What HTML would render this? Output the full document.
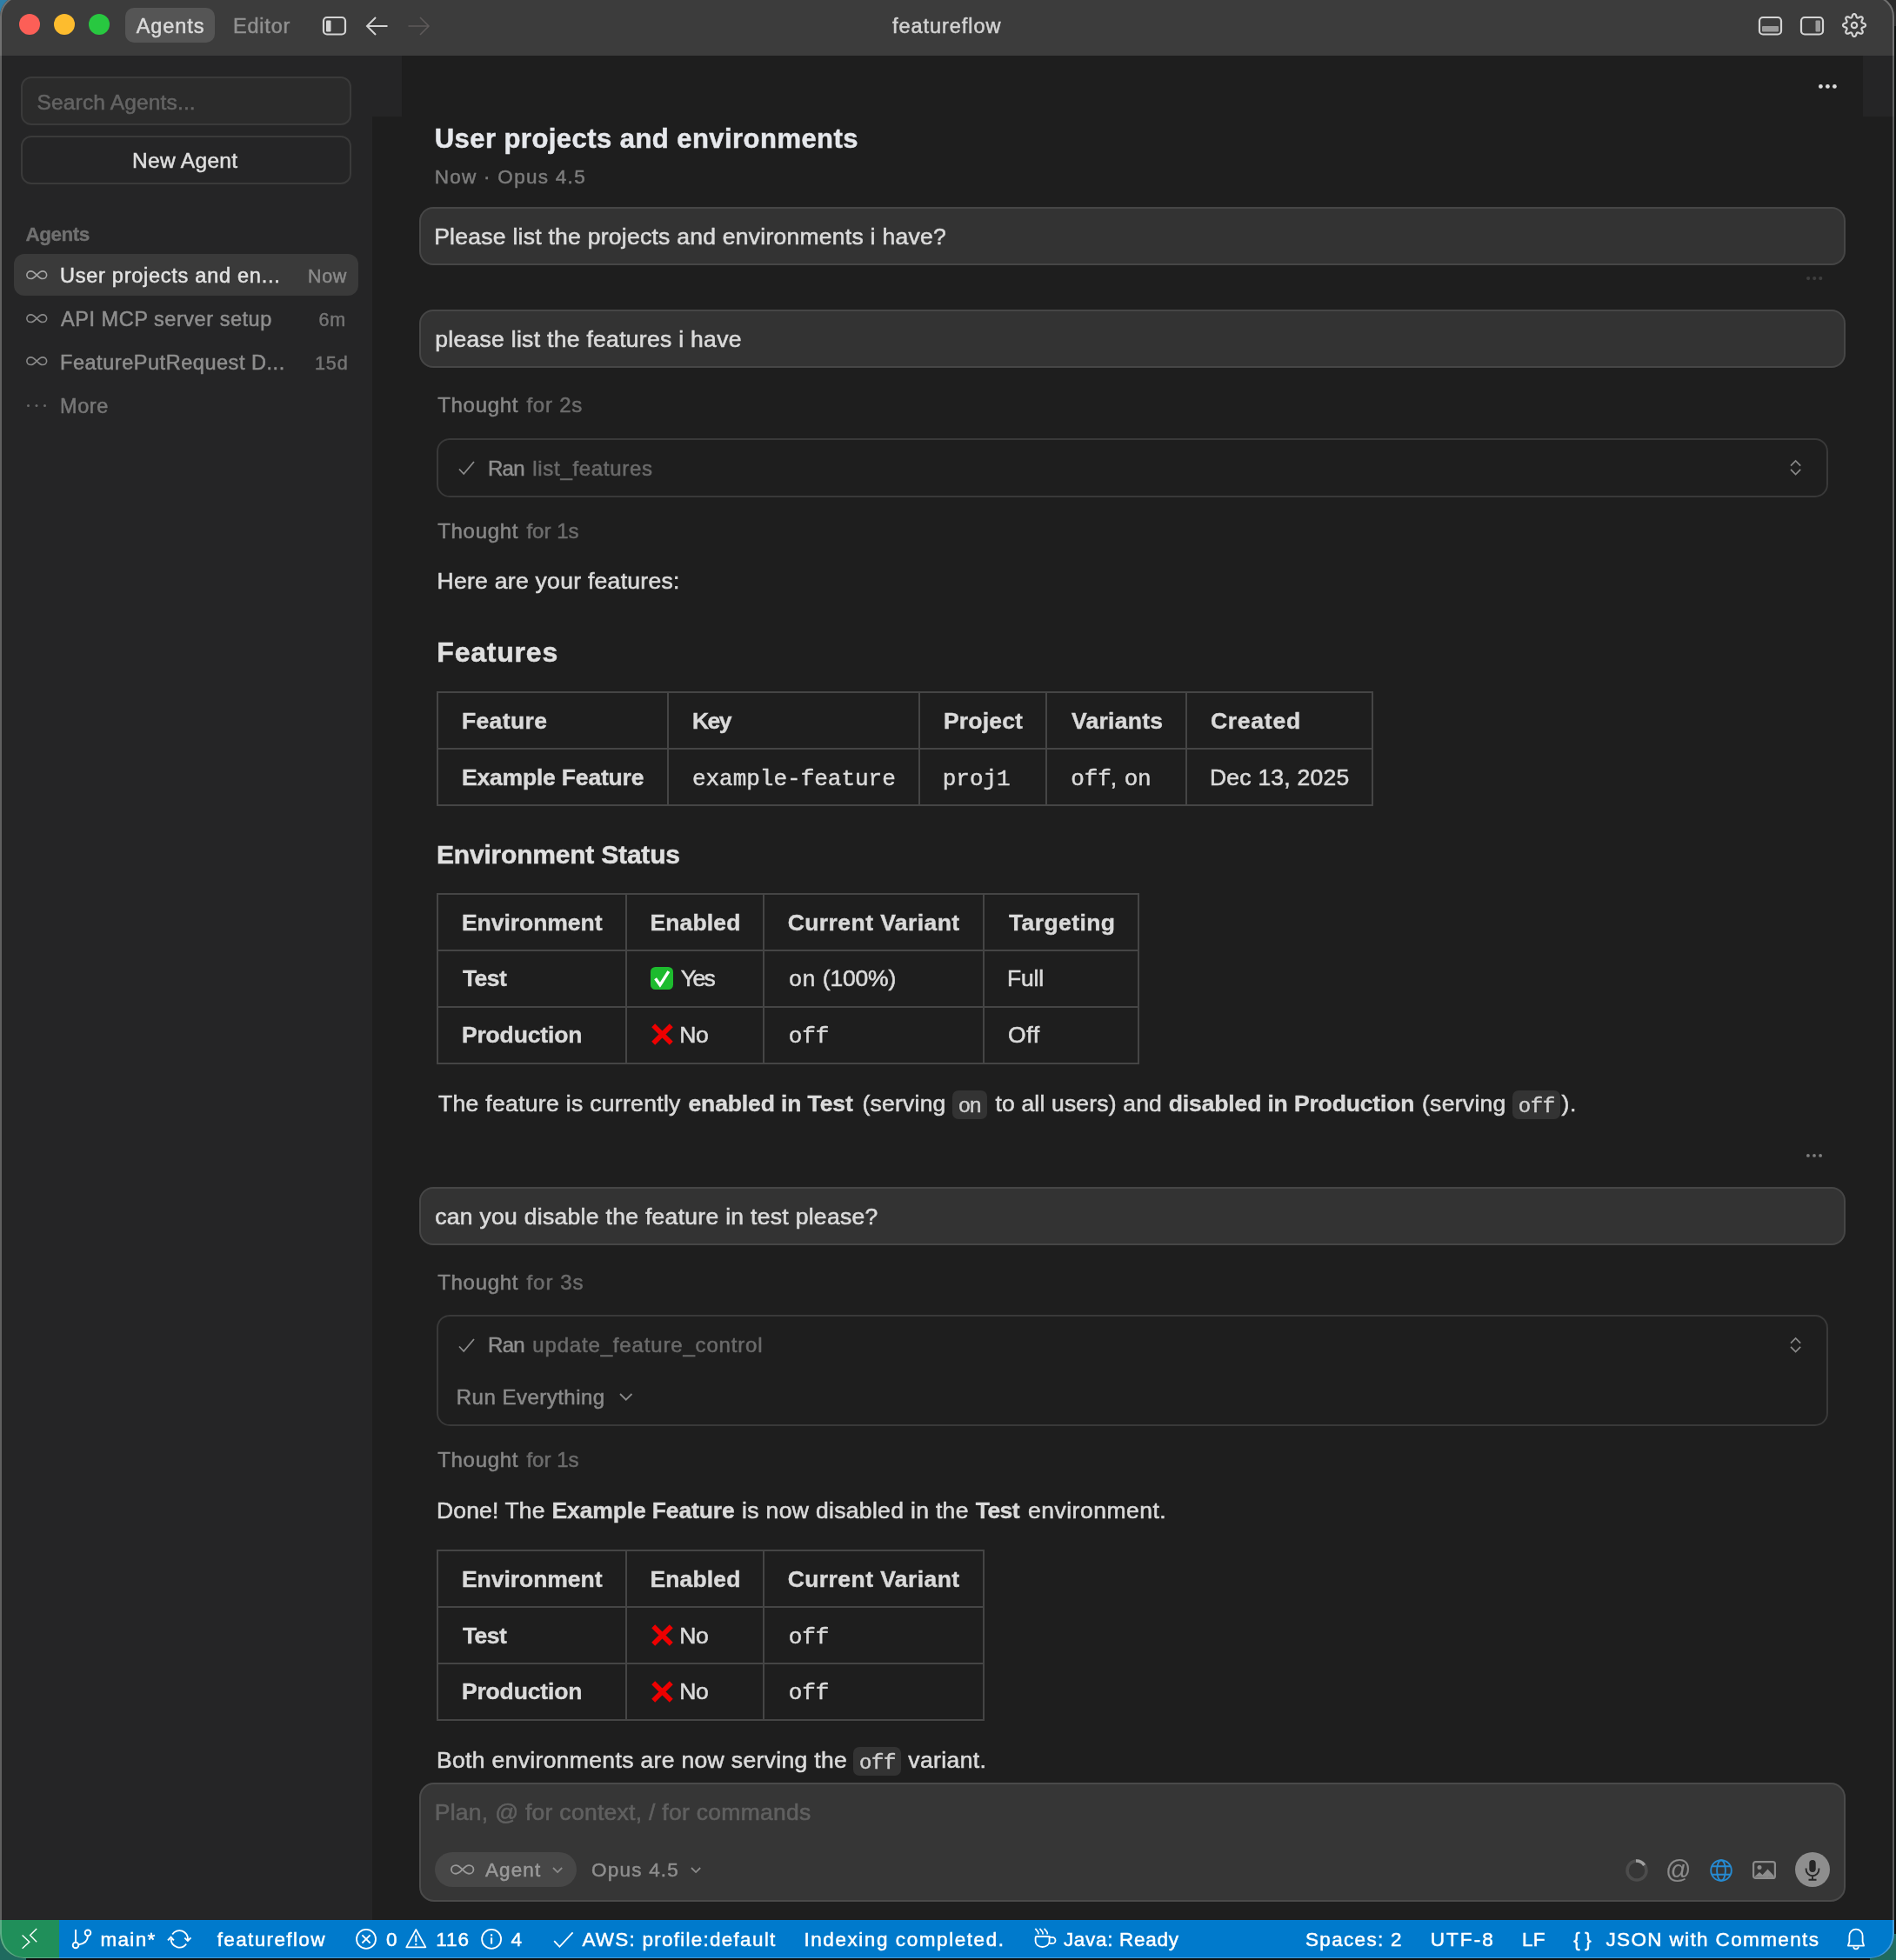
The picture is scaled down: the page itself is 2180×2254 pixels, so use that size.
<!DOCTYPE html>
<html><head><meta charset="utf-8"><title>featureflow</title><style>
html,body{margin:0;padding:0;background:#0b0f0e;}
body{width:2180px;height:2254px;position:relative;overflow:hidden;font-family:"Liberation Sans", sans-serif;}
.a{position:absolute;box-sizing:border-box;}
.t{position:absolute;line-height:0;white-space:pre;font-family:"Liberation Sans", sans-serif;}
.t i{display:inline-block;width:0;height:40px;}
.m{font-family:"Liberation Mono", monospace;}
#w{position:absolute;left:0;top:-5px;width:2178px;height:2257px;overflow:hidden;border-radius:24px 24px 28px 28px;background:#3c3c3c;}
#in{position:absolute;left:0;top:5px;width:2178px;height:2252px;will-change:transform;}
#wb{position:absolute;left:0;top:-5px;width:2178px;height:2257px;box-sizing:border-box;border-radius:24px 24px 28px 28px;border:2px solid rgba(255,255,255,0.27);border-bottom-width:1.5px;}
.k{position:absolute;width:30px;height:30px;}
svg{overflow:visible;}
</style></head><body>
<div class="k" style="left:0;top:0;background:#2f7fa8"></div><div class="k" style="left:0;top:2224px;background:#1f6b5f"></div><div class="k" style="left:2150px;top:2224px;background:#1f6b5f"></div><div class="k" style="left:2150px;top:0;background:#2a2a2a"></div>
<div id="w"><div id="in">
<div class="a" style="left:0px;top:0px;width:2178px;height:2252px;background:#1e1e1e;"></div>
<div class="a" style="left:0px;top:-5px;width:2178px;height:69px;background:#3c3c3c;"></div>
<div class="a" style="left:0px;top:64px;width:428px;height:2144px;background:#252526;"></div>
<div class="a" style="left:428px;top:64px;width:34px;height:70px;background:#252526;"></div>
<div class="a" style="left:2142px;top:64px;width:36px;height:70px;background:#252526;"></div>
<div class="a" style="left:22px;top:16px;width:24px;height:24px;background:#fc5f57;border-radius:12px;"></div>
<div class="a" style="left:62px;top:16px;width:24px;height:24px;background:#fdbc2e;border-radius:12px;"></div>
<div class="a" style="left:102px;top:16px;width:24px;height:24px;background:#28c840;border-radius:12px;"></div>
<div class="a" style="left:144px;top:9px;width:103px;height:40px;background:#555555;border-radius:10px;"></div>
<svg class="a" style="left:370px;top:18px;" width="30" height="24" viewBox="0 0 30 24"><rect x="2" y="2" width="25" height="19.5" rx="4" fill="none" stroke="#d4d4d4" stroke-width="2.2"/><rect x="5" y="5.5" width="5.5" height="13" rx="1" fill="#d4d4d4"/></svg>
<svg class="a" style="left:420px;top:18px;" width="28" height="24" viewBox="0 0 28 24"><path d="M25.5 12H2.5M12 2L2 12l10 10" fill="none" stroke="#d4d4d4" stroke-width="2" stroke-linejoin="miter"/></svg>
<svg class="a" style="left:467px;top:18px;" width="28" height="24" viewBox="0 0 28 24"><path d="M2.5 12h23M16 2l10 10-10 10" fill="none" stroke="#5e5a5a" stroke-width="1.6"/></svg>
<svg class="a" style="left:2021px;top:18px;" width="30" height="24" viewBox="0 0 30 24"><rect x="2" y="2" width="25" height="19.5" rx="4" fill="none" stroke="#d4d4d4" stroke-width="2.2"/><rect x="5" y="12" width="19" height="6.5" rx="1" fill="#9a9a9a"/></svg>
<svg class="a" style="left:2069px;top:18px;" width="30" height="24" viewBox="0 0 30 24"><rect x="2" y="2" width="25" height="19.5" rx="4" fill="none" stroke="#d4d4d4" stroke-width="2.2"/><rect x="18.5" y="5.5" width="5.5" height="13" rx="1" fill="#9a9a9a"/></svg>
<svg class="a" style="left:2116px;top:13px;" width="32" height="32" viewBox="0 0 32 32"><path d="M16.00 3.00L16.63 3.12L17.23 3.47L17.77 4.06L18.17 5.11L18.46 6.17L18.79 6.80L19.13 7.24L19.52 7.50L19.98 7.59L20.53 7.53L21.21 7.31L22.17 6.77L23.19 6.31L23.99 6.27L24.66 6.44L25.19 6.81L25.56 7.34L25.73 8.01L25.69 8.81L25.23 9.83L24.69 10.79L24.47 11.47L24.41 12.02L24.50 12.48L24.76 12.87L25.20 13.21L25.83 13.54L26.89 13.83L27.94 14.23L28.53 14.77L28.88 15.37L29.00 16.00L28.88 16.63L28.53 17.23L27.94 17.77L26.89 18.17L25.83 18.46L25.20 18.79L24.76 19.13L24.50 19.52L24.41 19.98L24.47 20.53L24.69 21.21L25.23 22.17L25.69 23.19L25.73 23.99L25.56 24.66L25.19 25.19L24.66 25.56L23.99 25.73L23.19 25.69L22.17 25.23L21.21 24.69L20.53 24.47L19.98 24.41L19.52 24.50L19.13 24.76L18.79 25.20L18.46 25.83L18.17 26.89L17.77 27.94L17.23 28.53L16.63 28.88L16.00 29.00L15.37 28.88L14.77 28.53L14.23 27.94L13.83 26.89L13.54 25.83L13.21 25.20L12.87 24.76L12.48 24.50L12.02 24.41L11.47 24.47L10.79 24.69L9.83 25.23L8.81 25.69L8.01 25.73L7.34 25.56L6.81 25.19L6.44 24.66L6.27 23.99L6.31 23.19L6.77 22.17L7.31 21.21L7.53 20.53L7.59 19.98L7.50 19.52L7.24 19.13L6.80 18.79L6.17 18.46L5.11 18.17L4.06 17.77L3.47 17.23L3.12 16.63L3.00 16.00L3.12 15.37L3.47 14.77L4.06 14.23L5.11 13.83L6.17 13.54L6.80 13.21L7.24 12.87L7.50 12.48L7.59 12.02L7.53 11.47L7.31 10.79L6.77 9.83L6.31 8.81L6.27 8.01L6.44 7.34L6.81 6.81L7.34 6.44L8.01 6.27L8.81 6.31L9.83 6.77L10.79 7.31L11.47 7.53L12.02 7.59L12.48 7.50L12.87 7.24L13.21 6.80L13.54 6.17L13.83 5.11L14.23 4.06L14.77 3.47L15.37 3.12L16.00 3.00Z" fill="none" stroke="#d4d4d4" stroke-width="2.2" stroke-linejoin="round"/><circle cx="16" cy="16" r="3.2" fill="none" stroke="#d4d4d4" stroke-width="2.2"/></svg>
<div class="a" style="left:24px;top:88px;width:380px;height:56px;background:#2b2b2b;border-radius:12px;border:2px solid #3a3a3a;"></div>
<div class="a" style="left:24px;top:156px;width:380px;height:56px;background:#252526;border-radius:12px;border:2px solid #3a3a3a;"></div>
<div class="a" style="left:16px;top:292px;width:396px;height:48px;background:#3a3a3a;border-radius:12px;"></div>
<svg class="a" style="left:29.5px;top:310.9px;" width="24.5" height="10.4" viewBox="0 0 24.5 10.4"><path d="M12.25 5.2C9.8 2.7 8.3 0.85 5.6 0.85 2.9 0.85 0.85 2.7 0.85 5.2S2.9 9.55 5.6 9.55C8.3 9.55 9.8 7.7 12.25 5.2zM12.25 5.2C14.7 2.7 16.2 0.85 18.9 0.85 21.6 0.85 23.65 2.7 23.65 5.2S21.6 9.55 18.9 9.55C16.2 9.55 14.7 7.7 12.25 5.2z" fill="none" stroke="#a4a4a4" stroke-width="1.6"/></svg>
<svg class="a" style="left:29.5px;top:360.9px;" width="24.5" height="10.4" viewBox="0 0 24.5 10.4"><path d="M12.25 5.2C9.8 2.7 8.3 0.85 5.6 0.85 2.9 0.85 0.85 2.7 0.85 5.2S2.9 9.55 5.6 9.55C8.3 9.55 9.8 7.7 12.25 5.2zM12.25 5.2C14.7 2.7 16.2 0.85 18.9 0.85 21.6 0.85 23.65 2.7 23.65 5.2S21.6 9.55 18.9 9.55C16.2 9.55 14.7 7.7 12.25 5.2z" fill="none" stroke="#8a8a8a" stroke-width="1.6"/></svg>
<svg class="a" style="left:29.5px;top:410.4px;" width="24.5" height="10.4" viewBox="0 0 24.5 10.4"><path d="M12.25 5.2C9.8 2.7 8.3 0.85 5.6 0.85 2.9 0.85 0.85 2.7 0.85 5.2S2.9 9.55 5.6 9.55C8.3 9.55 9.8 7.7 12.25 5.2zM12.25 5.2C14.7 2.7 16.2 0.85 18.9 0.85 21.6 0.85 23.65 2.7 23.65 5.2S21.6 9.55 18.9 9.55C16.2 9.55 14.7 7.7 12.25 5.2z" fill="none" stroke="#8a8a8a" stroke-width="1.6"/></svg>
<svg class="a" style="left:29.700000000000003px;top:463.5px;" width="24.0" height="5.0" viewBox="0 0 24.0 5.0"><circle cx="2.5" cy="2.5" r="1.5" fill="#6a6a6a"/><circle cx="12.0" cy="2.5" r="1.5" fill="#6a6a6a"/><circle cx="21.5" cy="2.5" r="1.5" fill="#6a6a6a"/></svg>
<svg class="a" style="left:2090.4px;top:95.6px;" width="22.8" height="6.8" viewBox="0 0 22.8 6.8"><circle cx="3.4" cy="3.4" r="2.4" fill="#dcdcdc"/><circle cx="11.4" cy="3.4" r="2.4" fill="#dcdcdc"/><circle cx="19.4" cy="3.4" r="2.4" fill="#dcdcdc"/></svg>
<div class="a" style="left:482px;top:238px;width:1640px;height:67px;background:#333333;border-radius:16px;border:2px solid #464646;"></div>
<svg class="a" style="left:2075.6000000000004px;top:316.7px;" width="20.4" height="6.2" viewBox="0 0 20.4 6.2"><circle cx="3.1" cy="3.1" r="2.1" fill="#3e3e3e"/><circle cx="10.2" cy="3.1" r="2.1" fill="#3e3e3e"/><circle cx="17.3" cy="3.1" r="2.1" fill="#3e3e3e"/></svg>
<div class="a" style="left:482px;top:356px;width:1640px;height:67px;background:#333333;border-radius:16px;border:2px solid #464646;"></div>
<div class="a" style="left:502px;top:503.6px;width:1600px;height:68.4px;border-radius:15px;border:2px solid #393939;"></div>
<svg class="a" style="left:526.8px;top:530.0px;" width="19" height="16" viewBox="0 0 19 16"><path d="M1 9.5l5.2 5.5L18 1" fill="none" stroke="#8c8c8c" stroke-width="1.8"/></svg>
<svg class="a" style="left:2058px;top:528.8000000000001px;" width="13.2" height="17.5" viewBox="0 0 13.2 17.5"><path d="M1 6.6L6.6 1l5.6 5.6M1 10.9l5.6 5.6 5.6-5.6" fill="none" stroke="#8a8a8a" stroke-width="1.7"/></svg>
<div class="a" style="left:502px;top:795px;width:1077px;height:2px;background:#454545;"></div>
<div class="a" style="left:502px;top:860px;width:1077px;height:2px;background:#454545;"></div>
<div class="a" style="left:502px;top:924.7px;width:1077px;height:2px;background:#454545;"></div>
<div class="a" style="left:502px;top:795px;width:2px;height:131.70000000000005px;background:#454545;"></div>
<div class="a" style="left:767px;top:795px;width:2px;height:131.70000000000005px;background:#454545;"></div>
<div class="a" style="left:1056px;top:795px;width:2px;height:131.70000000000005px;background:#454545;"></div>
<div class="a" style="left:1202px;top:795px;width:2px;height:131.70000000000005px;background:#454545;"></div>
<div class="a" style="left:1363px;top:795px;width:2px;height:131.70000000000005px;background:#454545;"></div>
<div class="a" style="left:1577px;top:795px;width:2px;height:131.70000000000005px;background:#454545;"></div>
<div class="a" style="left:502px;top:1027px;width:808px;height:2px;background:#454545;"></div>
<div class="a" style="left:502px;top:1092px;width:808px;height:2px;background:#454545;"></div>
<div class="a" style="left:502px;top:1156.8px;width:808px;height:2px;background:#454545;"></div>
<div class="a" style="left:502px;top:1221.6px;width:808px;height:2px;background:#454545;"></div>
<div class="a" style="left:502px;top:1027px;width:2px;height:196.5999999999999px;background:#454545;"></div>
<div class="a" style="left:718.5px;top:1027px;width:2px;height:196.5999999999999px;background:#454545;"></div>
<div class="a" style="left:876.8px;top:1027px;width:2px;height:196.5999999999999px;background:#454545;"></div>
<div class="a" style="left:1130px;top:1027px;width:2px;height:196.5999999999999px;background:#454545;"></div>
<div class="a" style="left:1308px;top:1027px;width:2px;height:196.5999999999999px;background:#454545;"></div>
<svg class="a" style="left:747.9px;top:1112px;" width="26" height="26" viewBox="0 0 26 26"><rect x="0" y="0" width="26" height="26" rx="5.5" fill="#1dbb2e"/><path d="M5.6 13.2l5.3 7.6L20.8 5.2" fill="none" stroke="#fff" stroke-width="3.4" stroke-linejoin="miter"/></svg>
<svg class="a" style="left:748.6px;top:1177.3px;" width="25" height="25" viewBox="0 0 25 25"><path d="M2.2 2.2L22.8 22.8M22.8 2.2L2.2 22.8" fill="none" stroke="#ee0000" stroke-width="5.6"/></svg>
<div class="a" style="left:1095px;top:1254.3px;width:39.5px;height:33px;background:#333333;border-radius:7px;"></div>
<div class="a" style="left:1739px;top:1254.3px;width:54.5px;height:33px;background:#333333;border-radius:7px;"></div>
<svg class="a" style="left:2076.0px;top:1326.1px;" width="20.0" height="5.8" viewBox="0 0 20.0 5.8"><circle cx="2.9" cy="2.9" r="1.9" fill="#808080"/><circle cx="10.0" cy="2.9" r="1.9" fill="#808080"/><circle cx="17.099999999999998" cy="2.9" r="1.9" fill="#808080"/></svg>
<div class="a" style="left:482px;top:1365px;width:1640px;height:67px;background:#333333;border-radius:16px;border:2px solid #464646;"></div>
<div class="a" style="left:502px;top:1512px;width:1600px;height:128px;border-radius:15px;border:2px solid #393939;"></div>
<svg class="a" style="left:526.5px;top:1538.5px;" width="19" height="16" viewBox="0 0 19 16"><path d="M1 9.5l5.2 5.5L18 1" fill="none" stroke="#8c8c8c" stroke-width="1.8"/></svg>
<svg class="a" style="left:2058px;top:1537.6px;" width="13.2" height="17.5" viewBox="0 0 13.2 17.5"><path d="M1 6.6L6.6 1l5.6 5.6M1 10.9l5.6 5.6 5.6-5.6" fill="none" stroke="#8a8a8a" stroke-width="1.7"/></svg>
<svg class="a" style="left:712.2px;top:1602.4px;" width="15.5" height="8.75" viewBox="0 0 15.5 8.75"><path d="M1 1l6.75 6.75L14.5 1" fill="none" stroke="#8a8a8a" stroke-width="1.8"/></svg>
<div class="a" style="left:502px;top:1781.7px;width:630px;height:2px;background:#454545;"></div>
<div class="a" style="left:502px;top:1846.6px;width:630px;height:2px;background:#454545;"></div>
<div class="a" style="left:502px;top:1911.8px;width:630px;height:2px;background:#454545;"></div>
<div class="a" style="left:502px;top:1976.7px;width:630px;height:2px;background:#454545;"></div>
<div class="a" style="left:502px;top:1781.7px;width:2px;height:197.0px;background:#454545;"></div>
<div class="a" style="left:718.5px;top:1781.7px;width:2px;height:197.0px;background:#454545;"></div>
<div class="a" style="left:876.8px;top:1781.7px;width:2px;height:197.0px;background:#454545;"></div>
<div class="a" style="left:1130px;top:1781.7px;width:2px;height:197.0px;background:#454545;"></div>
<svg class="a" style="left:748.6px;top:1867.8px;" width="25" height="25" viewBox="0 0 25 25"><path d="M2.2 2.2L22.8 22.8M22.8 2.2L2.2 22.8" fill="none" stroke="#ee0000" stroke-width="5.6"/></svg>
<svg class="a" style="left:748.6px;top:1932.5px;" width="25" height="25" viewBox="0 0 25 25"><path d="M2.2 2.2L22.8 22.8M22.8 2.2L2.2 22.8" fill="none" stroke="#ee0000" stroke-width="5.6"/></svg>
<div class="a" style="left:981.2px;top:2009px;width:54.399999999999864px;height:33px;background:#333333;border-radius:7px;"></div>
<div class="a" style="left:482px;top:2050.3px;width:1640px;height:137px;background:#363636;border-radius:17px;border:2px solid #4a4a4a;"></div>
<div class="a" style="left:500.4px;top:2130px;width:162.3px;height:39.7px;background:#474747;border-radius:20px;"></div>
<svg class="a" style="left:518.2px;top:2144.2px;" width="27.4" height="11.8" viewBox="0 0 24.5 10.4"><path d="M12.25 5.2C9.8 2.7 8.3 0.85 5.6 0.85 2.9 0.85 0.85 2.7 0.85 5.2S2.9 9.55 5.6 9.55C8.3 9.55 9.8 7.7 12.25 5.2zM12.25 5.2C14.7 2.7 16.2 0.85 18.9 0.85 21.6 0.85 23.65 2.7 23.65 5.2S21.6 9.55 18.9 9.55C16.2 9.55 14.7 7.7 12.25 5.2z" fill="none" stroke="#9a9a9a" stroke-width="1.6"/></svg>
<svg class="a" style="left:635.4px;top:2147.2px;" width="12.2" height="7.1" viewBox="0 0 12.2 7.1"><path d="M1 1l5.1 5.1L11.2 1" fill="none" stroke="#8a8a8a" stroke-width="1.8"/></svg>
<svg class="a" style="left:793.5px;top:2147.2px;" width="12.2" height="7.1" viewBox="0 0 12.2 7.1"><path d="M1 1l5.1 5.1L11.2 1" fill="none" stroke="#8a8a8a" stroke-width="1.8"/></svg>
<svg class="a" style="left:1868px;top:2137px;" width="28" height="28" viewBox="0 0 28 28"><circle cx="14" cy="14" r="11" fill="none" stroke="#4c4c4c" stroke-width="3.6"/><path d="M13 3a11 11 0 0 1 9.6 5" fill="none" stroke="#a0a0a0" stroke-width="3.6"/></svg>
<svg class="a" style="left:1966px;top:2138px;" width="26" height="26" viewBox="0 0 26 26"><g fill="none" stroke="#268bd2" stroke-width="1.9"><circle cx="13" cy="13" r="11.8"/><ellipse cx="13" cy="13" rx="4.9" ry="11.8"/><path d="M2.2 8.2h21.6M2.2 17.8h21.6"/></g></svg>
<svg class="a" style="left:2015px;top:2140px;" width="27" height="21" viewBox="0 0 27 21"><rect x="1.1" y="1.1" width="24.8" height="18.8" rx="2.5" fill="none" stroke="#8c8c8c" stroke-width="2.2"/><circle cx="8" cy="7.6" r="2.5" fill="#8c8c8c"/><path d="M2 18.5l6-5.5 3.5 3 6-6.5 7 7.5v2z" fill="#8c8c8c"/></svg>
<div class="a" style="left:2064px;top:2129.8px;width:40px;height:40px;background:#8e8e8e;border-radius:20px;"></div>
<svg class="a" style="left:2072px;top:2138px;" width="24" height="26" viewBox="0 0 24 26"><rect x="8.3" y="1" width="7.4" height="14" rx="3.7" fill="#262626"/><path d="M4.6 10.5v1.3a7.4 7.4 0 0 0 14.8 0v-1.3M12 19.2v4.6M7.5 23.8h9" fill="none" stroke="#262626" stroke-width="1.9"/></svg>
<div class="a" style="left:0px;top:2208px;width:2178px;height:44px;background:#007acc;"></div>
<div class="a" style="left:0px;top:2208px;width:68px;height:44px;background:#208f5a;"></div>
<svg class="a" style="left:24px;top:2216px;" width="20" height="26" viewBox="0 0 20 26"><path d="M1.6 9.6l8.2 7.6-8.2 7.6M18.2 2l-7.6 7.6 7.6 7.6" fill="none" stroke="#fff" stroke-width="1.4"/></svg>
<svg class="a" style="left:81px;top:2217px;" width="26" height="26" viewBox="0 0 26 26"><g fill="none" stroke="#fff" stroke-width="1.9"><circle cx="6" cy="20" r="3.3"/><circle cx="20" cy="5.8" r="3.3"/><path d="M6 2v14.7M20 9.1c0 7-6 9.6-10.7 10.3"/></g></svg>
<svg class="a" style="left:191px;top:2217px;" width="30" height="26" viewBox="0 0 30 26"><g fill="none" stroke="#fff" stroke-width="1.9"><path d="M7.18 7.49A9.7 9.7 0 0 1 24.95 13.76M21.3 11.6L24.9 15L28.5 11.3M23.17 18.47A9.7 9.7 0 0 1 5.6 12.8M2 14.4L5.5 10.7L8.9 14.4"/></g></svg>
<svg class="a" style="left:408px;top:2217px;" width="26" height="26" viewBox="0 0 26 26"><g fill="none" stroke="#fff" stroke-width="1.8"><circle cx="13" cy="12.9" r="11"/><path d="M8.4 8.3l9.2 9.2M17.6 8.3l-9.2 9.2"/></g></svg>
<svg class="a" style="left:465px;top:2216px;" width="27" height="26" viewBox="0 0 27 26"><path d="M13.3 3L24.4 23.3H2.2z" fill="none" stroke="#fff" stroke-width="1.7" stroke-linejoin="round"/><path d="M13.3 9.6v7.6M13.3 18.9v2.3" stroke="#fff" stroke-width="2" fill="none"/></svg>
<svg class="a" style="left:552px;top:2217px;" width="26" height="26" viewBox="0 0 26 26"><g fill="none" stroke="#fff" stroke-width="1.8"><circle cx="13.1" cy="12.9" r="11"/></g><path d="M13.1 11.3v7.2M13.1 7.2v2.3" stroke="#fff" stroke-width="2.1" fill="none"/></svg>
<svg class="a" style="left:636px;top:2220.5px;" width="24" height="20" viewBox="0 0 24 20"><path d="M1.2 11.2l6.2 6.6L22.6 1.4" fill="none" stroke="#fff" stroke-width="1.8"/></svg>
<svg class="a" style="left:1188px;top:2216px;" width="28" height="26" viewBox="0 0 28 26"><g fill="none" stroke="#fff" stroke-width="1.8"><path d="M4.1 11h14.5v5.5a8 6.5 0 0 1-16 0v-4a1.5 1.5 0 0 1 1.5-1.5z"/><path d="M18.6 11.9h3.4a3.5 3.5 0 0 1 0 7h-3.6"/><path d="M2.5 1.8c.6 2.2 3.2 2.6 3.4 5v1.6M7.6 1.8c.6 2.2 3.2 2.6 3.4 5v1.6M12.8 1.8c.6 2.2 3.2 2.6 3.4 5v1.6" stroke-width="1.7"/></g></svg>
<svg class="a" style="left:2122px;top:2216px;" width="24" height="28" viewBox="0 0 24 28"><path d="M2.9 21.6l1.5-4.6V10.3a7.6 7.6 0 0 1 15.2 0V17l1.5 4.6z" fill="none" stroke="#fff" stroke-width="1.8" stroke-linejoin="round"/><path d="M9.2 22.6a2.8 2.8 0 0 0 5.6 0" fill="none" stroke="#fff" stroke-width="1.7"/></svg>
<div class="t" style="left:156.7px;top:-2.3px;font-size:23.5px;color:#dadada;letter-spacing:0.92px;-webkit-text-stroke:0.52px #dadada;"><i></i>Agents</div>
<div class="t" style="left:268.0px;top:-2.3px;font-size:23.5px;color:#909090;letter-spacing:0.79px;-webkit-text-stroke:0.52px #909090;"><i></i>Editor</div>
<div class="t" style="left:1026.1px;top:-1.9px;font-size:23.5px;color:#d2d2d2;letter-spacing:0.93px;-webkit-text-stroke:0.52px #d2d2d2;"><i></i>featureflow</div>
<div class="t" style="left:42.5px;top:85.5px;font-size:24.5px;color:#646464;letter-spacing:0.16px;-webkit-text-stroke:0.54px #646464;"><i></i>Search Agents...</div>
<div class="t" style="left:152.0px;top:153.0px;font-size:24.5px;color:#dedede;letter-spacing:0.33px;-webkit-text-stroke:0.54px #dedede;"><i></i>New Agent</div>
<div class="t" style="left:29.5px;top:236.5px;font-size:22.5px;color:#707070;font-weight:700;letter-spacing:-0.51px;-webkit-text-stroke:0.36px #707070;"><i></i>Agents</div>
<div class="t" style="left:69.0px;top:285.0px;font-size:23.5px;color:#e2e2e2;letter-spacing:0.74px;-webkit-text-stroke:0.52px #e2e2e2;"><i></i>User projects and en...</div>
<div class="t" style="left:354.0px;top:285.0px;font-size:21.5px;color:#8a8a8a;letter-spacing:0.61px;-webkit-text-stroke:0.47px #8a8a8a;"><i></i>Now</div>
<div class="t" style="left:70.0px;top:335.0px;font-size:23.5px;color:#8e8e8e;letter-spacing:0.54px;-webkit-text-stroke:0.52px #8e8e8e;"><i></i>API MCP server setup</div>
<div class="t" style="left:366.5px;top:335.0px;font-size:21.5px;color:#757575;letter-spacing:0.90px;-webkit-text-stroke:0.47px #757575;"><i></i>6m</div>
<div class="t" style="left:69.0px;top:384.5px;font-size:23.5px;color:#8e8e8e;letter-spacing:0.54px;-webkit-text-stroke:0.52px #8e8e8e;"><i></i>FeaturePutRequest D...</div>
<div class="t" style="left:362.0px;top:384.5px;font-size:21.5px;color:#757575;letter-spacing:0.89px;-webkit-text-stroke:0.47px #757575;"><i></i>15d</div>
<div class="t" style="left:69.0px;top:435.0px;font-size:23.5px;color:#777777;letter-spacing:0.58px;-webkit-text-stroke:0.52px #777777;"><i></i>More</div>
<div class="t" style="left:499.7px;top:129.8px;font-size:31px;color:#e6e8ec;font-weight:700;letter-spacing:0.45px;-webkit-text-stroke:0.5px #e6e8ec;"><i></i>User projects and environments</div>
<div class="t" style="left:499.7px;top:170.7px;font-size:22.5px;color:#7c7c7c;letter-spacing:1.28px;-webkit-text-stroke:0.49px #7c7c7c;"><i></i>Now · Opus 4.5</div>
<div class="t" style="left:499.2px;top:240.8px;font-size:26.5px;color:#dadada;letter-spacing:0.26px;-webkit-text-stroke:0.58px #dadada;"><i></i>Please list the projects and environments i have?</div>
<div class="t" style="left:500.2px;top:358.8px;font-size:26.5px;color:#dadada;letter-spacing:0.30px;-webkit-text-stroke:0.58px #dadada;"><i></i>please list the features i have</div>
<div class="t" style="left:503.2px;top:434.0px;font-size:24px;color:#878787;letter-spacing:0.70px;-webkit-text-stroke:0.53px #878787;"><i></i>Thought</div>
<div class="t" style="left:605.4px;top:434.0px;font-size:24px;color:#6c6c6c;letter-spacing:0.78px;-webkit-text-stroke:0.53px #6c6c6c;"><i></i>for 2s</div>
<div class="t" style="left:560.9px;top:506.5px;font-size:24px;color:#8f8f8f;letter-spacing:-0.64px;-webkit-text-stroke:0.53px #8f8f8f;"><i></i>Ran</div>
<div class="t" style="left:612.3px;top:506.5px;font-size:24px;color:#6a6a6a;letter-spacing:0.69px;-webkit-text-stroke:0.53px #6a6a6a;"><i></i>list_features</div>
<div class="t" style="left:503.2px;top:579.2px;font-size:24px;color:#878787;letter-spacing:0.70px;-webkit-text-stroke:0.53px #878787;"><i></i>Thought</div>
<div class="t" style="left:605.4px;top:579.2px;font-size:24px;color:#6c6c6c;letter-spacing:0.02px;-webkit-text-stroke:0.53px #6c6c6c;"><i></i>for 1s</div>
<div class="t" style="left:502.5px;top:636.6px;font-size:26.5px;color:#dadada;letter-spacing:0.29px;-webkit-text-stroke:0.58px #dadada;"><i></i>Here are your features:</div>
<div class="t" style="left:502.3px;top:720.8px;font-size:32px;color:#e0e0e0;font-weight:700;letter-spacing:0.79px;-webkit-text-stroke:0.51px #e0e0e0;"><i></i>Features</div>
<div class="t" style="left:530.9px;top:797.7px;font-size:26.5px;color:#dadada;font-weight:700;letter-spacing:0.39px;-webkit-text-stroke:0.42px #dadada;"><i></i>Feature</div>
<div class="t" style="left:795.9px;top:797.7px;font-size:26.5px;color:#dadada;font-weight:700;letter-spacing:-1.49px;-webkit-text-stroke:0.42px #dadada;"><i></i>Key</div>
<div class="t" style="left:1084.9px;top:797.7px;font-size:26.5px;color:#dadada;font-weight:700;letter-spacing:0.20px;-webkit-text-stroke:0.42px #dadada;"><i></i>Project</div>
<div class="t" style="left:1231.9px;top:797.7px;font-size:26.5px;color:#dadada;font-weight:700;letter-spacing:0.29px;-webkit-text-stroke:0.42px #dadada;"><i></i>Variants</div>
<div class="t" style="left:1391.9px;top:797.7px;font-size:26.5px;color:#dadada;font-weight:700;letter-spacing:0.75px;-webkit-text-stroke:0.42px #dadada;"><i></i>Created</div>
<div class="t" style="left:530.9px;top:862.5px;font-size:26.5px;color:#dadada;font-weight:700;letter-spacing:-0.18px;-webkit-text-stroke:0.42px #dadada;"><i></i>Example Feature</div>
<div class="t m" style="left:795.9px;top:862.5px;font-size:26px;color:#dadada;letter-spacing:-0.01px;-webkit-text-stroke:0.5px #dadada;"><i></i>example-feature</div>
<div class="t m" style="left:1083.7px;top:862.5px;font-size:26px;color:#dadada;-webkit-text-stroke:0.5px #dadada;"><i></i>proj1</div>
<div class="t m" style="left:1231.2px;top:862.5px;font-size:26px;color:#dadada;letter-spacing:-0.10px;-webkit-text-stroke:0.5px #dadada;"><i></i>off</div>
<div class="t" style="left:1276.8px;top:862.5px;font-size:26.5px;color:#dadada;-webkit-text-stroke:0.58px #dadada;"><i></i>,</div>
<div class="t m" style="left:1292.8px;top:862.5px;font-size:26px;color:#dadada;letter-spacing:-0.30px;-webkit-text-stroke:0.5px #dadada;"><i></i>on</div>
<div class="t" style="left:1390.9px;top:862.5px;font-size:26.5px;color:#dadada;letter-spacing:0.25px;-webkit-text-stroke:0.58px #dadada;"><i></i>Dec 13, 2025</div>
<div class="t" style="left:502.0px;top:952.6px;font-size:30px;color:#e0e0e0;font-weight:700;letter-spacing:-0.20px;-webkit-text-stroke:0.48px #e0e0e0;"><i></i>Environment Status</div>
<div class="t" style="left:530.9px;top:1029.7px;font-size:26.5px;color:#dadada;font-weight:700;letter-spacing:-0.03px;-webkit-text-stroke:0.42px #dadada;"><i></i>Environment</div>
<div class="t" style="left:747.4px;top:1029.7px;font-size:26.5px;color:#dadada;font-weight:700;letter-spacing:0.15px;-webkit-text-stroke:0.42px #dadada;"><i></i>Enabled</div>
<div class="t" style="left:905.7px;top:1029.7px;font-size:26.5px;color:#dadada;font-weight:700;letter-spacing:0.43px;-webkit-text-stroke:0.42px #dadada;"><i></i>Current Variant</div>
<div class="t" style="left:1159.9px;top:1029.7px;font-size:26.5px;color:#dadada;font-weight:700;letter-spacing:0.42px;-webkit-text-stroke:0.42px #dadada;"><i></i>Targeting</div>
<div class="t" style="left:531.9px;top:1094.1px;font-size:26.5px;color:#dadada;font-weight:700;letter-spacing:-0.53px;-webkit-text-stroke:0.42px #dadada;"><i></i>Test</div>
<div class="t" style="left:782.8px;top:1094.1px;font-size:26.5px;color:#dadada;letter-spacing:-1.64px;-webkit-text-stroke:0.58px #dadada;"><i></i>Yes</div>
<div class="t m" style="left:906.7px;top:1094.1px;font-size:26px;color:#dadada;letter-spacing:-0.10px;-webkit-text-stroke:0.5px #dadada;"><i></i>on</div>
<div class="t" style="left:945.8px;top:1094.1px;font-size:26.5px;color:#dadada;letter-spacing:-0.20px;-webkit-text-stroke:0.58px #dadada;"><i></i>(100%)</div>
<div class="t" style="left:1157.9px;top:1094.1px;font-size:26.5px;color:#dadada;letter-spacing:-0.17px;-webkit-text-stroke:0.58px #dadada;"><i></i>Full</div>
<div class="t" style="left:530.9px;top:1159.3px;font-size:26.5px;color:#dadada;font-weight:700;letter-spacing:-0.15px;-webkit-text-stroke:0.42px #dadada;"><i></i>Production</div>
<div class="t" style="left:781.3px;top:1159.3px;font-size:26.5px;color:#dadada;letter-spacing:-0.44px;-webkit-text-stroke:0.58px #dadada;"><i></i>No</div>
<div class="t m" style="left:906.7px;top:1159.3px;font-size:26px;color:#dadada;letter-spacing:-0.10px;-webkit-text-stroke:0.5px #dadada;"><i></i>off</div>
<div class="t" style="left:1158.9px;top:1159.3px;font-size:26.5px;color:#dadada;letter-spacing:0.65px;-webkit-text-stroke:0.58px #dadada;"><i></i>Off</div>
<div class="t" style="left:504.0px;top:1238.4px;font-size:26.5px;color:#dadada;letter-spacing:0.32px;-webkit-text-stroke:0.58px #dadada;"><i></i>The feature is currently</div>
<div class="t" style="left:791.5px;top:1238.4px;font-size:26.5px;color:#dadada;font-weight:700;letter-spacing:-0.12px;-webkit-text-stroke:0.42px #dadada;"><i></i>enabled in Test</div>
<div class="t" style="left:991.5px;top:1238.4px;font-size:26.5px;color:#dadada;letter-spacing:0.23px;-webkit-text-stroke:0.58px #dadada;"><i></i>(serving</div>
<div class="t m" style="left:1101.7px;top:1239.3px;font-size:24px;color:#d0d0d0;letter-spacing:-1.70px;-webkit-text-stroke:0.5px #d0d0d0;"><i></i>on</div>
<div class="t" style="left:1144.4px;top:1238.4px;font-size:26.5px;color:#dadada;letter-spacing:0.18px;-webkit-text-stroke:0.58px #dadada;"><i></i>to all users) and</div>
<div class="t" style="left:1343.8px;top:1238.4px;font-size:26.5px;color:#dadada;font-weight:700;letter-spacing:-0.14px;-webkit-text-stroke:0.42px #dadada;"><i></i>disabled in Production</div>
<div class="t" style="left:1635.0px;top:1238.4px;font-size:26.5px;color:#dadada;letter-spacing:0.30px;-webkit-text-stroke:0.58px #dadada;"><i></i>(serving</div>
<div class="t m" style="left:1745.8px;top:1239.3px;font-size:24px;color:#d0d0d0;letter-spacing:-0.45px;-webkit-text-stroke:0.5px #d0d0d0;"><i></i>off</div>
<div class="t" style="left:1795.5px;top:1238.4px;font-size:26.5px;color:#dadada;letter-spacing:0.68px;-webkit-text-stroke:0.58px #dadada;"><i></i>).</div>
<div class="t" style="left:500.2px;top:1367.8px;font-size:26.5px;color:#dadada;letter-spacing:0.30px;-webkit-text-stroke:0.58px #dadada;"><i></i>can you disable the feature in test please?</div>
<div class="t" style="left:503.2px;top:1443.1px;font-size:24px;color:#878787;letter-spacing:0.70px;-webkit-text-stroke:0.53px #878787;"><i></i>Thought</div>
<div class="t" style="left:605.4px;top:1443.1px;font-size:24px;color:#6c6c6c;letter-spacing:1.02px;-webkit-text-stroke:0.53px #6c6c6c;"><i></i>for 3s</div>
<div class="t" style="left:561.0px;top:1515.2px;font-size:24px;color:#8f8f8f;letter-spacing:-0.69px;-webkit-text-stroke:0.53px #8f8f8f;"><i></i>Ran</div>
<div class="t" style="left:612.3px;top:1515.2px;font-size:24px;color:#6a6a6a;letter-spacing:0.83px;-webkit-text-stroke:0.53px #6a6a6a;"><i></i>update_feature_control</div>
<div class="t" style="left:524.8px;top:1575.1px;font-size:24px;color:#8a8a8a;letter-spacing:0.48px;-webkit-text-stroke:0.53px #8a8a8a;"><i></i>Run Everything</div>
<div class="t" style="left:503.2px;top:1647.2px;font-size:24px;color:#878787;letter-spacing:0.70px;-webkit-text-stroke:0.53px #878787;"><i></i>Thought</div>
<div class="t" style="left:605.4px;top:1647.2px;font-size:24px;color:#6c6c6c;letter-spacing:0.02px;-webkit-text-stroke:0.53px #6c6c6c;"><i></i>for 1s</div>
<div class="t" style="left:502.0px;top:1705.7px;font-size:26.5px;color:#dadada;letter-spacing:0.15px;-webkit-text-stroke:0.58px #dadada;"><i></i>Done! The</div>
<div class="t" style="left:634.5px;top:1705.7px;font-size:26.5px;color:#dadada;font-weight:700;letter-spacing:-0.14px;-webkit-text-stroke:0.42px #dadada;"><i></i>Example Feature</div>
<div class="t" style="left:853.1px;top:1705.7px;font-size:26.5px;color:#dadada;letter-spacing:0.33px;-webkit-text-stroke:0.58px #dadada;"><i></i>is now disabled in the</div>
<div class="t" style="left:1121.8px;top:1705.7px;font-size:26.5px;color:#dadada;font-weight:700;letter-spacing:-0.57px;-webkit-text-stroke:0.42px #dadada;"><i></i>Test</div>
<div class="t" style="left:1182.0px;top:1705.7px;font-size:26.5px;color:#dadada;letter-spacing:0.50px;-webkit-text-stroke:0.58px #dadada;"><i></i>environment.</div>
<div class="t" style="left:530.9px;top:1784.9px;font-size:26.5px;color:#dadada;font-weight:700;letter-spacing:-0.03px;-webkit-text-stroke:0.42px #dadada;"><i></i>Environment</div>
<div class="t" style="left:747.4px;top:1784.9px;font-size:26.5px;color:#dadada;font-weight:700;letter-spacing:0.15px;-webkit-text-stroke:0.42px #dadada;"><i></i>Enabled</div>
<div class="t" style="left:905.7px;top:1784.9px;font-size:26.5px;color:#dadada;font-weight:700;letter-spacing:0.43px;-webkit-text-stroke:0.42px #dadada;"><i></i>Current Variant</div>
<div class="t" style="left:531.9px;top:1849.6px;font-size:26.5px;color:#dadada;font-weight:700;letter-spacing:-0.53px;-webkit-text-stroke:0.42px #dadada;"><i></i>Test</div>
<div class="t" style="left:781.3px;top:1849.6px;font-size:26.5px;color:#dadada;letter-spacing:-0.44px;-webkit-text-stroke:0.58px #dadada;"><i></i>No</div>
<div class="t m" style="left:906.7px;top:1849.6px;font-size:26px;color:#dadada;letter-spacing:-0.10px;-webkit-text-stroke:0.5px #dadada;"><i></i>off</div>
<div class="t" style="left:530.9px;top:1914.3px;font-size:26.5px;color:#dadada;font-weight:700;letter-spacing:-0.15px;-webkit-text-stroke:0.42px #dadada;"><i></i>Production</div>
<div class="t" style="left:781.3px;top:1914.3px;font-size:26.5px;color:#dadada;letter-spacing:-0.44px;-webkit-text-stroke:0.58px #dadada;"><i></i>No</div>
<div class="t m" style="left:906.7px;top:1914.3px;font-size:26px;color:#dadada;letter-spacing:-0.10px;-webkit-text-stroke:0.5px #dadada;"><i></i>off</div>
<div class="t" style="left:502.0px;top:1993.1px;font-size:26.5px;color:#dadada;letter-spacing:0.34px;-webkit-text-stroke:0.58px #dadada;"><i></i>Both environments are now serving the</div>
<div class="t m" style="left:988.0px;top:1994.0px;font-size:24px;color:#d0d0d0;letter-spacing:-0.45px;-webkit-text-stroke:0.5px #d0d0d0;"><i></i>off</div>
<div class="t" style="left:1044.3px;top:1993.1px;font-size:26.5px;color:#dadada;letter-spacing:0.38px;-webkit-text-stroke:0.58px #dadada;"><i></i>variant.</div>
<div class="t" style="left:499.7px;top:2053.4px;font-size:26.5px;color:#606060;letter-spacing:0.28px;-webkit-text-stroke:0.58px #606060;"><i></i>Plan, @ for context, / for commands</div>
<div class="t" style="left:558.0px;top:2118.4px;font-size:22.5px;color:#9a9a9a;letter-spacing:1.09px;-webkit-text-stroke:0.49px #9a9a9a;"><i></i>Agent</div>
<div class="t" style="left:680.0px;top:2118.4px;font-size:22.5px;color:#8e8e8e;letter-spacing:1.22px;-webkit-text-stroke:0.49px #8e8e8e;"><i></i>Opus 4.5</div>
<div class="t" style="left:1915.0px;top:2119.5px;font-size:29px;color:#8c8c8c;-webkit-text-stroke:0.15px #8c8c8c;"><i></i>@</div>
<div class="t" style="left:115.4px;top:2198.0px;font-size:22.5px;color:#ffffff;letter-spacing:1.36px;-webkit-text-stroke:0.49px #ffffff;"><i></i>main*</div>
<div class="t" style="left:249.7px;top:2198.0px;font-size:22.5px;color:#ffffff;letter-spacing:1.37px;-webkit-text-stroke:0.49px #ffffff;"><i></i>featureflow</div>
<div class="t" style="left:444.1px;top:2198.0px;font-size:22.5px;color:#ffffff;letter-spacing:-0.40px;-webkit-text-stroke:0.49px #ffffff;"><i></i>0</div>
<div class="t" style="left:501.3px;top:2198.0px;font-size:22.5px;color:#ffffff;letter-spacing:0.90px;-webkit-text-stroke:0.49px #ffffff;"><i></i>116</div>
<div class="t" style="left:587.6px;top:2198.0px;font-size:22.5px;color:#ffffff;letter-spacing:0.40px;-webkit-text-stroke:0.49px #ffffff;"><i></i>4</div>
<div class="t" style="left:669.4px;top:2198.0px;font-size:22.5px;color:#ffffff;letter-spacing:1.25px;-webkit-text-stroke:0.49px #ffffff;"><i></i>AWS: profile:default</div>
<div class="t" style="left:924.4px;top:2198.0px;font-size:22.5px;color:#ffffff;letter-spacing:1.57px;-webkit-text-stroke:0.49px #ffffff;"><i></i>Indexing completed.</div>
<div class="t" style="left:1222.9px;top:2198.2px;font-size:22.5px;color:#ffffff;letter-spacing:0.70px;-webkit-text-stroke:0.49px #ffffff;"><i></i>Java: Ready</div>
<div class="t" style="left:1501.0px;top:2198.2px;font-size:22.5px;color:#ffffff;letter-spacing:1.32px;-webkit-text-stroke:0.49px #ffffff;"><i></i>Spaces: 2</div>
<div class="t" style="left:1644.8px;top:2198.2px;font-size:22.5px;color:#ffffff;letter-spacing:2.04px;-webkit-text-stroke:0.49px #ffffff;"><i></i>UTF-8</div>
<div class="t" style="left:1749.9px;top:2198.2px;font-size:22.5px;color:#ffffff;letter-spacing:0.29px;-webkit-text-stroke:0.49px #ffffff;"><i></i>LF</div>
<div class="t" style="left:1809.2px;top:2197.5px;font-size:22px;color:#ffffff;letter-spacing:-0.18px;-webkit-text-stroke:0.48px #ffffff;"><i></i>{ }</div>
<div class="t" style="left:1846.4px;top:2198.2px;font-size:22.5px;color:#ffffff;letter-spacing:1.37px;-webkit-text-stroke:0.49px #ffffff;"><i></i>JSON with Comments</div>
</div></div><div id="wb"></div>
</body></html>
